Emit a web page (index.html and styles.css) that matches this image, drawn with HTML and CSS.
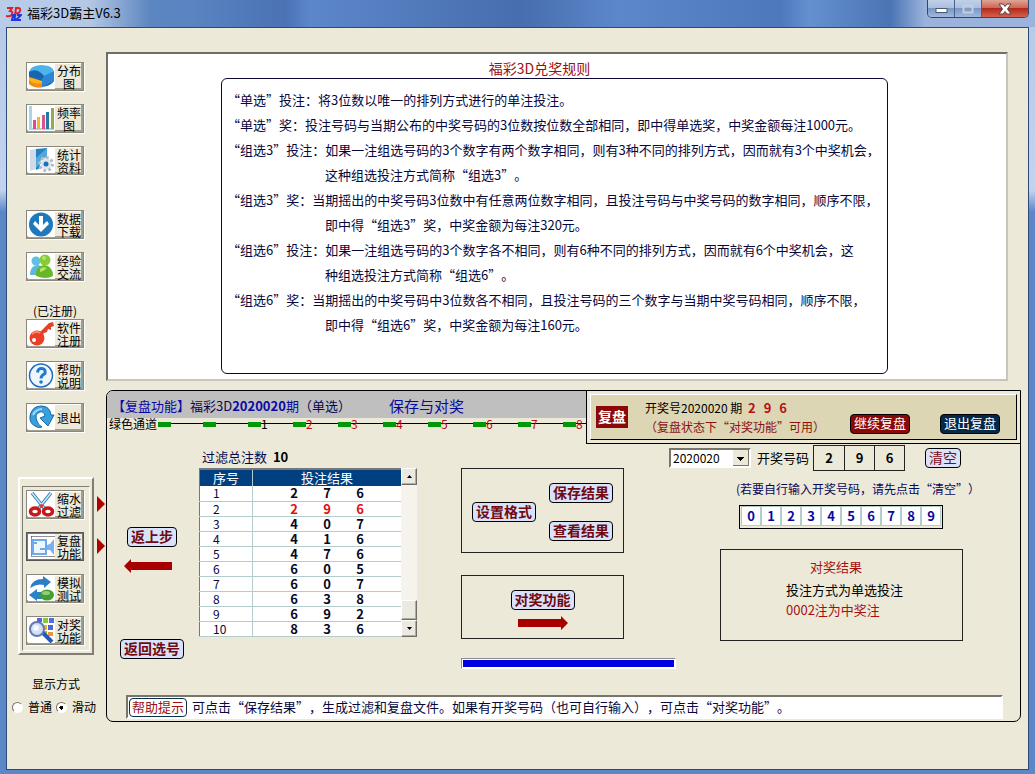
FILE: index.html
```html
<!DOCTYPE html>
<html lang="zh-CN">
<head>
<meta charset="utf-8">
<title>福彩3D霸主V6.3</title>
<link rel="stylesheet" href="styles.css">
</head>
<body>
<div class="window">
  <header class="titlebar">
    <svg class="app-icon" width="16" height="16" viewBox="0 0 16 16">
      <g fill="none" stroke-width="2"><path d="M1 2h5L4 5q3 0 2 3t-6 2" stroke="#e02028"/><path d="M9 9l1-7h2q3 0 2 3t-4 2" stroke="#e02028"/><path d="M6 14l1-5h2q1 1-1 2 2 1 0 3zM11 9h4l-5 5h5" stroke="#2038e0"/></g>
    </svg>
    <h1 class="title">福彩3D霸主V6.3</h1>
    <div class="caption">
      <button class="cap cap-min" aria-label="最小化"><svg width="13" height="7" viewBox="0 0 13 7"><rect x="1" y="1.500" width="11" height="4" fill="#fff" stroke="#4b5a70"/></svg></button>
      <button class="cap cap-max" aria-label="最大化" disabled><svg width="12" height="10" viewBox="0 0 12 10"><rect x="1.500" y="1.500" width="9" height="7" fill="none" stroke="#c3d0e2" stroke-width="2"/><rect x="4.500" y="4.500" width="3" height="2" fill="none" stroke="#8a9cb8"/></svg></button>
      <button class="cap cap-close" aria-label="关闭"><svg width="14" height="12" viewBox="0 0 14 12"><path d="M1 1h4l2 2.500L9 1h4L9.500 6 13 11H9L7 8.500 5 11H1l3.500-5z" fill="#fff" stroke="#5b4048"/></svg></button>
    </div>
  </header>

  <main class="client">
    <nav class="sidebar">
      <div class="tools">
        <button class="tool"><svg viewBox="0 0 27 25"><path d="M1 10v9q5 6 14 4l-1-9z" fill="#fdb515"/><path d="M1 16v4q6 5 14 3v-4q-9 2-14-3z" fill="#f58a10"/><path d="M1 7v6l13 4v6q9-1 12-6V8z" fill="#1968b8"/><path d="M14 11l12-4v10l-12 6z" fill="#2c86d4"/><path d="M1 8q1-6 12-7 11 0 13 6l-10 5-3-3z" fill="#4db4ea"/><path d="M1 8q7-4 12 1l3 3-2 3Q9 11 1 13z" fill="#1a63b0"/></svg><span>分布<br>图</span></button>
        <button class="tool"><svg viewBox="0 0 27 25"><path d="M1 0h3v22h22v2H1z" fill="#a9d6ec"/><path d="M5 14h3v9H5z" fill="#dc4c90"/><path d="M9 11h3v12H9z" fill="#f2b630"/><path d="M14 9h3v14h-3z" fill="#e0508c"/><path d="M18 6h3v17h-3z" fill="#2778a4"/><path d="M23 2h3v21h-3z" fill="#91ad48"/></svg><span>频率<br>图</span></button>
        <button class="tool"><svg viewBox="0 0 27 25"><path d="M2 2l6-1v20l-6 2z" fill="#cfdbe6"/><path d="M8 1l11-1v17L8 22z" fill="#2482c4"/><path d="M8 10L19 0v9L8 20z" fill="#52a8dc"/><circle cx="18" cy="16" r="6.500" fill="#e9edf0" stroke="#b3bcc5" stroke-width="3" stroke-dasharray="2.500 2.500"/><circle cx="18" cy="16" r="5" fill="#dfe5ea"/><circle cx="18" cy="16" r="2.500" fill="#1473ba"/></svg><span>统计<br>资料</span></button>
      </div>
      <div class="tools">
        <button class="tool"><svg viewBox="0 0 27 25"><circle cx="13" cy="12.500" r="12" fill="#1d78bc"/><path d="M11 4h4v9l4-4 2 3-8 8-8-8 2-3 4 4z" fill="#fff"/></svg><span>数据<br>下载</span></button>
        <button class="tool"><svg viewBox="0 0 27 25"><path d="M2 21q0-9 7-10 5 0 6 5v5z" fill="#5bb8dc"/><circle cx="8" cy="7" r="4.500" fill="#62bfe0"/><path d="M8 22q-1-10 8-11 9 1 9 11-7 4-17 0z" fill="#67b828"/><circle cx="17" cy="6" r="5.500" fill="#86cc38"/><path d="M12 15q3-3 7-1-3 3-7 4z" fill="#b6e468"/><circle cx="16" cy="4" r="2" fill="#b2e468"/></svg><span>经验<br>交流</span></button>
      </div>
      <div class="tools">
        <p class="registered">(已注册)</p>
        <button class="tool"><svg viewBox="0 0 27 25"><path d="M10 13L21 2l4-1 1 4-3 1v3l-3-1-1 3-3 1-2 3z" fill="#e04424"/><circle cx="9" cy="17" r="7.500" fill="#ea4026"/><circle cx="6" cy="19" r="2" fill="#fff"/><path d="M4 13q4-4 8-1" stroke="#ff8868" stroke-width="2" fill="none"/></svg><span>软件<br>注册</span></button>
        <button class="tool"><svg viewBox="0 0 27 25"><circle cx="13" cy="12.500" r="11.500" fill="#eef5fb" stroke="#1c6cc4" stroke-width="1.500"/><path d="M9.500 9.500Q10 5 14 5.500t3 5q-4 2-4 5" stroke="#2078d0" stroke-width="3" fill="none"/><circle cx="13" cy="19" r="1.800" fill="#2078d0"/></svg><span>帮助<br>说明</span></button>
        <button class="tool"><svg viewBox="0 0 27 25"><path d="M9 22Q1 19 2 11 4 1 13 1q9 0 10 9h3l-6 11-8-8 5-2q-1-5-5-4-6 2-3 9 1 4 5 6-3 1-5 0z" fill="#38a0dc" stroke="#1668a8"/><path d="M5 10q3-6 9-6" stroke="#a0dcf8" stroke-width="2" fill="none"/></svg><span>退出</span></button>
      </div>
      <div class="group">
        <div class="group-inner">
          <button class="tool marked"><svg viewBox="0 0 27 25"><path d="M4 1l13 16M23 1L10 17" stroke="#3a86b8" stroke-width="3.500"/><path d="M4 1l13 16M23 1L10 17" stroke="#c8e8f8" stroke-width="1.500"/><ellipse cx="7" cy="19.500" rx="4.500" ry="3.500" fill="none" stroke="#c81818" stroke-width="3.500"/><ellipse cx="20" cy="19.500" rx="4.500" ry="3.500" fill="none" stroke="#c81818" stroke-width="3.500"/><circle cx="13.500" cy="14" r="2" fill="#d84040"/></svg><span>缩水<br>过滤</span></button>
          <button class="tool marked pressed"><svg viewBox="0 0 27 25"><path d="M3.500 2.500H27M3.500 2.500V22.500H27" fill="none" stroke="#222" stroke-dasharray="1 1"/><rect x="5" y="6" width="13" height="14" fill="#edf5ff" stroke="#6ea8ee" stroke-width="2"/><path d="M12 15h5M5 9h4" stroke="#6ea8ee" stroke-width="2"/><path d="M19 11l3-1 4-5v16l-4-5h-3z" fill="#78b0f0"/></svg><span>复盘<br>功能</span></button>
          <button class="tool"><svg viewBox="0 0 27 25"><path d="M2 12Q4 3 15 3V0l8 6-7 6V9Q9 7 2 12z" fill="#2a7dc8"/><path d="M14 23H9v2L1 19l8-6v3h6z" fill="#2a82c8"/><ellipse cx="19" cy="19" rx="7" ry="5.500" fill="#42a030"/><ellipse cx="18" cy="17" rx="4" ry="2" fill="#94cc78"/></svg><span>模拟<br>测试</span></button>
          <button class="tool"><svg viewBox="0 0 27 25"><path d="M9 0h5v4H9zM20 7h5v5h-5z" fill="#4a68dc"/><path d="M15 0h5v5h-5zM15 13h4v4h-4z" fill="#86c838"/><path d="M21 0h5v5h-5z" fill="#5070e0"/><path d="M15 7h4v5h-4z" fill="#f0b020"/><path d="M20 14h5v4h-5z" fill="#f09040"/><path d="M15 15l9 9" stroke="#2858b0" stroke-width="4"/><circle cx="9" cy="11" r="7" fill="#cfe0fa" stroke="#6878a8" stroke-width="2"/><circle cx="8" cy="10" r="3" fill="#f4f8ff"/></svg><span>对奖<br>功能</span></button>
        </div>
      </div>
      <fieldset class="mode">
        <legend>显示方式</legend>
        <label><input type="radio" name="mode"><span>普通</span></label>
        <label><input type="radio" name="mode" checked><span>滑动</span></label>
      </fieldset>
    </nav>

    <div class="content">
      <section class="rules">
        <h2>福彩3D兑奖规则</h2>
        <div class="rules-box">
          <p>“单选”投注：将3位数以唯一的排列方式进行的单注投注。</p>
          <p>“单选”奖：投注号码与当期公布的中奖号码的3位数按位数全部相同，即中得单选奖，中奖金额每注1000元。</p>
          <p>“组选3”投注：如果一注组选号码的3个数字有两个数字相同，则有3种不同的排列方式，因而就有3个中奖机会，</p>
          <p class="cont">这种组选投注方式简称“组选3”。</p>
          <p>“组选3”奖：当期摇出的中奖号码3位数中有任意两位数字相同，且投注号码与中奖号码的数字相同，顺序不限，</p>
          <p class="cont">即中得“组选3”奖，中奖金额为每注320元。</p>
          <p>“组选6”投注：如果一注组选号码的3个数字各不相同，则有6种不同的排列方式，因而就有6个中奖机会，这</p>
          <p class="cont">种组选投注方式简称“组选6”。</p>
          <p>“组选6”奖：当期摇出的中奖号码中3位数各不相同，且投注号码的三个数字与当期中奖号码相同，顺序不限，</p>
          <p class="cont">即中得“组选6”奖，中奖金额为每注160元。</p>
        </div>
      </section>

      <section class="panel">
        <div class="panel-top">
          <div class="head">
            <div class="head-bar">
              <p class="head-text"><span class="blue">【复盘功能】</span>福彩3D<b class="blue">2020020</b><span class="blue">期</span>（单选）</p>
              <h2 class="head-title">保存与对奖</h2>
            </div>
            <div class="track">
              <span class="track-label">绿色通道</span>
              <ol class="steps"><li></li><li></li><li class="first">1</li><li>2</li><li>3</li><li>4</li><li>5</li><li>6</li><li>7</li><li>8</li></ol>
            </div>
          </div>
          <div class="replay">
            <div class="replay-inner">
              <strong class="badge">复盘</strong>
              <div class="replay-text">
                <p>开奖号2020020 期 <b><i>2</i><i>9</i><i>6</i></b></p>
                <p class="dark-red">（复盘状态下“对奖功能”可用）</p>
              </div>
              <div class="replay-actions">
                <button class="pill pill-red">继续复盘</button>
                <button class="pill pill-navy">退出复盘</button>
              </div>
            </div>
          </div>
        </div>

        <div class="work">
          <div class="steps-nav">
            <button class="pill">返上步</button>
            <svg class="arrow-left" width="48" height="14" viewBox="0 0 48 14"><path d="M0 7l7-7v3h41v8H7v3z" fill="#a80000"/></svg>
            <button class="pill">返回选号</button>
          </div>

          <div class="bets">
            <p class="bets-total">过滤总注数 <b>10</b></p>
            <div class="grid-box">
              <table>
                <thead><tr><th class="no">序号</th><th>投注结果</th></tr></thead>
                <tbody>
                  <tr><td>1</td><td><i>2</i><i>7</i><i>6</i></td></tr>
                  <tr class="hit"><td>2</td><td><i>2</i><i>9</i><i>6</i></td></tr>
                  <tr><td>3</td><td><i>4</i><i>0</i><i>7</i></td></tr>
                  <tr><td>4</td><td><i>4</i><i>1</i><i>6</i></td></tr>
                  <tr><td>5</td><td><i>4</i><i>7</i><i>6</i></td></tr>
                  <tr><td>6</td><td><i>6</i><i>0</i><i>5</i></td></tr>
                  <tr><td>7</td><td><i>6</i><i>0</i><i>7</i></td></tr>
                  <tr><td>8</td><td><i>6</i><i>3</i><i>8</i></td></tr>
                  <tr><td>9</td><td><i>6</i><i>9</i><i>2</i></td></tr>
                  <tr><td>10</td><td><i>8</i><i>3</i><i>6</i></td></tr>
                </tbody>
              </table>
              <div class="scroll">
                <button aria-label="向上"><svg width="5" height="3" viewBox="0 0 5 3"><path d="M0 3l2.500-3L5 3z"/></svg></button>
                <span class="thumb"></span>
                <button aria-label="向下"><svg width="5" height="3" viewBox="0 0 5 3"><path d="M0 0l2.500 3L5 0z"/></svg></button>
              </div>
            </div>
          </div>

          <div class="ops">
            <div class="op-boxes">
              <div class="box save-box">
                <button class="pill">设置格式</button>
                <div class="save-col">
                  <button class="pill">保存结果</button>
                  <button class="pill">查看结果</button>
                </div>
              </div>
              <div class="box check-box">
                <button class="pill">对奖功能</button>
                <svg width="50" height="14" viewBox="0 0 50 14"><path d="M50 7l-7-7v3H0v8h43v3z" fill="#a80000"/></svg>
              </div>
            </div>

            <div class="result">
              <div class="draw">
                <select aria-label="期号"><option>2020020</option></select>
                <span class="draw-label">开奖号码</span>
                <div class="cells"><b>2</b><b>9</b><b>6</b></div>
                <button class="pill pill-clear">清空</button>
              </div>
              <p class="hint">(若要自行输入开奖号码，请先点击“清空”）</p>
              <div class="keypad">
                <button>0</button><button>1</button><button>2</button><button>3</button><button>4</button><button>5</button><button>6</button><button>7</button><button>8</button><button>9</button>
              </div>
              <div class="box outcome">
                <h3>对奖结果</h3>
                <p>投注方式为单选投注</p>
                <p class="won">0002注为中奖注</p>
              </div>
            </div>

            <div class="progress"><div class="progress-fill"></div></div>
          </div>
        </div>

        <div class="help"><span class="help-tag">帮助提示</span><p>可点击“保存结果”，生成过滤和复盘文件。如果有开奖号码（也可自行输入），可点击“对奖功能”。</p></div>
      </section>
    </div>
  </main>
</div>
</body>
</html>
```

FILE: styles.css
```css
* { box-sizing: border-box; margin: 0; padding: 0; }

body {
  font: 13px/16px "Noto Sans CJK SC", sans-serif;
  font-kerning: none;
  text-spacing-trim: space-all;
  color: #000;
  background: #5b86c8;
}

button, select, input { font: inherit; color: inherit; }
button { cursor: pointer; }
h1, h2, h3 { font-weight: normal; }
i { font-style: normal; }
svg { display: block; flex: none; }

.window {
  display: flex;
  flex-direction: column;
  min-height: 100vh;
  padding: 0 6px 4px;
  background: linear-gradient(#b5c9e8 0, #c2d3ee 190px, #5b86c8 212px, #5b86c8 100%);
}

/* Title bar */
.titlebar {
  display: flex;
  align-items: center;
  height: 27px;
  margin: 0 -6px;
  padding: 0 6px;
  background: linear-gradient(90deg, #b9cce8 0, #b4c7e4 90px, #5c86c0 150px, #5a84c2 190px, #4a72b4 285px, #5c87ca 310px, #476eae 520px, #5c88ca 620px, #4d78bb 780px, #6590d0 810px, #4a74b4 890px, #9ab2dc 925px, #9ab4de 100%);
}
.app-icon { margin-right: 5px; }
.title { flex: 1; font-size: 13px; line-height: 20px; padding-bottom: 2px; }
.caption {
  align-self: flex-start;
  display: flex;
  height: 18px;
  border: 1px solid #33476b;
  border-top: 0;
  border-radius: 0 0 5px 5px;
  overflow: hidden;
}
.cap {
  display: flex;
  align-items: center;
  justify-content: center;
  width: 27px;
  border: 0;
  border-right: 1px solid #4a6190;
  background: linear-gradient(#c0d0e8 0, #abc0df 45%, #7b97c3 50%, #9fb9de 100%);
}
.cap-min { padding-top: 4px; }
.cap-close {
  width: 46px;
  border-right: 0;
  background: linear-gradient(#e0a494 0, #cd6855 45%, #b32a1c 50%, #d6604c 100%);
}

/* Client area */
.client {
  flex: 1;
  display: grid;
  grid-template-columns: 99px 1fr;
  border: 1px solid #2b4a78;
  background: #ece9d8;
}

/* Sidebar */
.sidebar { display: flex; flex-direction: column; padding: 34px 0 0 11px; }
.tools {
  display: flex;
  flex-direction: column;
  gap: 13px;
  padding-left: 8px;
  margin-bottom: 35px;
}
.tools:nth-child(2) { margin-bottom: 22px; }
.tools:nth-child(3) { margin-bottom: 45px; }
.tool {
  position: relative;
  display: flex;
  align-items: center;
  width: 58px;
  height: 29px;
  padding-left: 1px;
  background: #ece9d8;
  border: 1px solid #8a887c;
  box-shadow: inset -2px -2px 0 #a09e90, inset 1px 1px 0 #fff, 1px 1px 0 #fff;
  font-size: 12px;
  line-height: 13px;
}
.tool svg { width: 27px; height: 25px; background: #fff; }
.tool span { flex: 1; white-space: nowrap; }
.tool.pressed { border-color: #555; box-shadow: inset 0 0 0 1px #777; }
.tool.marked::after {
  content: "";
  position: absolute;
  left: 70px;
  top: 5px;
  border: 8px solid transparent;
  border-left-color: #b00000;
  border-right: 0;
}
.registered { margin-bottom: -13px; width: 58px; text-align: center; font-size: 12px; line-height: 16px; }
.group {
  width: 76px;
  padding: 7px 2px 2px;
  border: 2px solid;
  border-color: #fff #807e74 #807e74 #fff;
}
.group-inner {
  display: flex;
  flex-direction: column;
  gap: 13px;
  padding: 3px 3px 5px 3px;
  border: 1px solid;
  border-color: #807e74 #fff #fff #807e74;
}
.mode {
  display: flex;
  flex-wrap: wrap;
  gap: 4px;
  margin: 21px 0 0 -6px;
  border: 0;
  font-size: 12px;
}
.mode legend { padding-left: 20px; margin-bottom: 7px; }
.mode label { display: flex; align-items: center; gap: 5px; }
.mode input {
  appearance: none;
  width: 11px;
  height: 11px;
  border: 1px solid;
  border-color: #77756c #fff #fff #77756c;
  border-radius: 50%;
  background: #fff;
}
.mode input:checked { background: radial-gradient(circle, #000 0 2px, #fff 2px); }

/* Content column */
.content { padding: 24px 7px 0 0; min-width: 0; }
.rules {
  margin-right: 13px;
  padding: 5px 118px 5px 113px;
  background: #fff;
  border: 2px solid;
  border-color: #706e64 #c8c6bc #c8c6bc #706e64;
}
.rules h2 {
  padding-right: 30px;
  margin-bottom: 1px;
  color: #9c1010;
  font-size: 14px;
  line-height: 18px;
  text-align: center;
}
.rules-box {
  min-height: 296px;
  padding: 8px 5px;
  border: 1px solid #0a0838;
  border-radius: 6px;
  color: #08083c;
  line-height: 25px;
  white-space: nowrap;
}
.rules-box .cont { padding-left: 98px; }

/* Lower panel */
.panel {
  margin-top: 9px;
  border: 1px solid #000;
  border-radius: 7px 0 7px 7px;
}
.panel-top { display: grid; grid-template-columns: 479px 1fr; height: 51px; }
.head-bar {
  display: flex;
  align-items: center;
  height: 27px;
  padding-left: 5px;
  padding-top: 2px;
  background: #bfbfbf;
  border-top-left-radius: 6px;
  color: #08084c;
}
.head-text { width: 277px; white-space: nowrap; }
.blue { color: #0808a8; }
.head-title { font-size: 15px; color: #0808a0; }
.track { display: flex; align-items: center; height: 12px; padding-left: 2px; font-size: 12px; }
.track-label { width: 49px; white-space: nowrap; }
.steps {
  flex: 1;
  display: flex;
  list-style: none;
  height: 18px;
  line-height: 18px;
  background: linear-gradient(#000, #000) 0 8px / 100% 1px no-repeat;
}
.steps li { flex: none; display: flex; align-items: center; width: 45px; color: #b01010; }
.steps li:last-child { width: auto; }
.steps li.first { color: #000; }
.steps li::before { content: ""; width: 13px; height: 5px; background: #009808; }

.replay { padding: 3px; border: 1px solid #000; border-width: 0 0 1px 1px; }
.replay-inner {
  display: flex;
  align-items: center;
  height: 46px;
  padding: 0 16px 0 5px;
  background: #dcd6b4;
  border: 1px solid;
  border-color: #fff #000 #000 #fff;
}
.badge { padding: 2px 2px 4px; background: #8c0808; color: #fff; font-size: 14px; line-height: 16px; }
.replay-text { margin-left: 17px; line-height: 19px; white-space: nowrap; font-size: 12px; }
.replay-text b { display: inline-flex; gap: 8px; color: #b81010; font-size: 13px; margin-left: 3px; }
.dark-red { color: #8c1010; }
.replay-actions { display: flex; gap: 30px; margin-left: auto; padding-top: 14px; }

.pill {
  height: 20px;
  padding: 0 3px 2px;
  border: 1px solid #000;
  border-radius: 4px;
  background: #d8e2fa;
  color: #700a10;
  font-size: 14px;
  line-height: 16px;
  font-weight: bold;
  white-space: nowrap;
}
.pill-red, .pill-navy { font-size: 13px; font-weight: normal; color: #fff; }
.pill-red { background: #880808; }
.pill-navy { background: #042848; }
.pill-clear { font-weight: normal; color: #800a10; }

.work { display: grid; grid-template-columns: 64px 218px 1fr; padding-left: 13px; }
.steps-nav { display: flex; flex-direction: column; align-items: center; padding-top: 85px; }
.arrow-left { margin: 12px 8px 66px 0; }

.bets { margin-left: 15px; }
.bets-total { padding: 7px 0 3px 3px; color: #08084c; }
.bets-total b { color: #000; margin-left: 3px; }
.grid-box { display: flex; width: 218px; }
.grid-box table {
  flex: 1;
  border-collapse: collapse;
  background: #fff;
  border-left: 1px solid #777;
  border-top: 2px solid #777;
}
th { height: 17px; background: #004080; color: #fff; font-weight: normal; line-height: 16px; }
th.no { width: 53px; }
td { height: 15px; line-height: 14px; border-bottom: 1px solid #b4cccc; color: #08083c; font-size: 12px; }
th + th, td + td { border-left: 1px solid #b4cccc; }
td:first-child { padding-left: 13px; }
td + td { text-align: center; font-size: 13px; font-weight: bold; color: #08081c; }
td i { display: inline-block; width: 33px; }
.hit td + td { color: #e01010; }
.scroll {
  display: flex;
  flex-direction: column;
  width: 16px;
  background: #f5f3ec;
}
.scroll button, .thumb {
  display: flex;
  align-items: center;
  justify-content: center;
  height: 17px;
  background: #ece9e0;
  border: 1px solid;
  border-color: #fff #706e64 #706e64 #fff;
  box-shadow: inset -1px -1px 0 #b0aea0;
}
.thumb { height: 20px; margin-top: auto; }

.ops {
  display: grid;
  grid-template-columns: 163px 45px 7px 1fr;
  grid-template-rows: 216px auto;
  margin-left: 59px;
}
.op-boxes { grid-column: 1; padding-top: 26px; }
.box { border: 1px solid #222; }
.save-box { display: flex; align-items: center; justify-content: space-between; height: 85px; padding: 2px 10px 0; }
.save-col { display: flex; flex-direction: column; gap: 18px; }
.check-box { display: flex; flex-direction: column; align-items: center; gap: 6px; height: 64px; margin-top: 22px; padding-top: 14px; }
.progress {
  grid-column: 1 / 4;
  height: 11px;
  padding: 1px;
  border: 1px solid;
  border-color: #8c8c98 #fff #fff #8c8c98;
  background: #fff;
}
.progress-fill { height: 7px; background: #0000e0; }

.result { grid-column: 3 / 5; padding-top: 3px; }
.draw { display: flex; align-items: center; }
.draw select {
  appearance: none;
  width: 82px;
  height: 20px;
  padding: 0 2px;
  border: 2px solid;
  border-color: #77756c #fff #fff #77756c;
  border-radius: 0;
  font-size: 12px;
  line-height: 16px;
  background:
    linear-gradient(#000, #000) right 5px top 7px / 7px 1px no-repeat,
    linear-gradient(#000, #000) right 6px top 8px / 5px 1px no-repeat,
    linear-gradient(#000, #000) right 7px top 9px / 3px 1px no-repeat,
    linear-gradient(#000, #000) right 8px top 10px / 1px 1px no-repeat,
    linear-gradient(#77756c, #77756c) right top / 1px 100% no-repeat,
    linear-gradient(#77756c, #77756c) right bottom / 16px 1px no-repeat,
    linear-gradient(#ece9d8, #ece9d8) right top / 16px 100% no-repeat,
    #fff;
}
.draw-label { margin: 0 4px 0 6px; white-space: nowrap; }
.cells { display: flex; border: 1px solid #222; }
.cells b { width: 30px; line-height: 24px; text-align: center; }
.cells b + b { border-left: 1px solid #222; }
.pill-clear { margin-left: 20px; }
.hint { margin: 10px 0 8px 67px; font-size: 12px; color: #08085c; white-space: nowrap; }
.keypad {
  display: grid;
  grid-template-columns: repeat(10, 20px);
  width: 204px;
  height: 24px;
  margin-left: 70px;
  padding: 0 1px 2px;
  border: 1px solid #000;
}
.keypad button {
  border: 1px solid #b4cccc;
  background: #fff;
  color: #0808a0;
  font-weight: bold;
  line-height: 16px;
}
.outcome { width: 243px; height: 92px; margin: 20px 0 0 51px; padding: 7px 0 0 65px; line-height: 20px; }
.outcome h3 { font-size: 13px; line-height: 20px; color: #a81010; padding-left: 24px; margin-bottom: 3px; }
.won { color: #a81010; }

.help {
  display: flex;
  align-items: center;
  gap: 5px;
  height: 24px;
  margin: 26px 17px 2px 19px;
  padding: 0 1px;
  border: 2px solid;
  border-color: #77756c #fff #fff #77756c;
  background: #fff;
  color: #08083c;
  white-space: nowrap;
}
.help-tag { padding: 0 2px 1px; border: 1px solid #08304c; border-radius: 4px; color: #a01010; }
```
